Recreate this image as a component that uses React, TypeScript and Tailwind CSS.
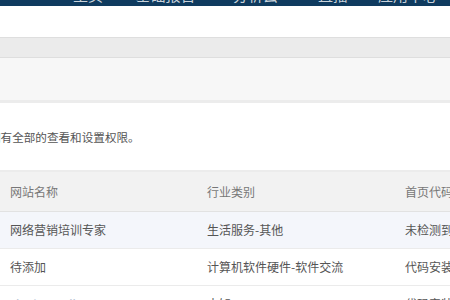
import React from "react";

const font = { fontFamily: '"Microsoft YaHei", "Noto Sans CJK SC", "Liberation Sans", sans-serif' };

const navItems = [
  { label: "主页", w: "w-[60px]" },
  { label: "基础报告", w: "w-[95px]" },
  { label: "分析云", w: "w-[85px]" },
  { label: "直播", w: "w-[70px]" },
  { label: "应用中心", w: "w-[80px]" },
];

const rows = [
  { name: "网络营销培训专家", cat: "生活服务-其他", code: "未检测到代码", active: true, faint: false },
  { name: "待添加", cat: "计算机软件硬件-软件交流", code: "代码安装正确", active: false, faint: false },
  { name: "xiaohuangjian.com", cat: "未知", code: "代码安装正确", active: false, faint: true },
];

export default function App() {
  return (
    <div className="w-[450px] h-[300px] overflow-hidden bg-white text-[12px]" style={font}>
      {/* top navigation */}
      <div className="h-[6px] bg-[#0f3b5f] overflow-hidden flex pl-[58px]">
        {navItems.map((n) => (
          <div key={n.label} className={`${n.w} text-center text-[15px] leading-[20px] -mt-[15px] text-[#c9d2da] shrink-0`}>
            {n.label}
          </div>
        ))}
      </div>
      <div className="h-[31px] bg-white" />
      {/* breadcrumb strip */}
      <div className="h-[21px] bg-[#ebebeb] border-y border-[#dedede]" />
      {/* toolbar */}
      <div className="h-[45px] bg-[#f7f7f7] border-b-[3px] border-[#ececec]" />
      {/* notice */}
      <div className="h-[67px] flex items-center bg-white">
        <p className="-ml-[127px] pt-[3px] text-[11.6px] text-[#555] whitespace-nowrap">
          您是该账户的所有者，拥有全部的查看和设置权限。
        </p>
      </div>
      {/* site table */}
      <div className="border-t-[2px] border-[#ececec]">
        <div className="h-[40px] bg-[#f2f2f2] border-b border-[#e2e2e2] flex items-center text-[#777]">
          <div className="w-[197px] pl-[10px] shrink-0">网站名称</div>
          <div className="w-[198px] pl-[10px] shrink-0">行业类别</div>
          <div className="pl-[10px] whitespace-nowrap">首页代码状态</div>
        </div>
        {rows.map((r) => (
          <div
            key={r.name}
            className={`h-[37px] border-b border-[#ebebeb] flex items-center text-[#555] whitespace-nowrap ${r.active ? "bg-[#f4f6fb]" : "bg-white"}`}
          >
            <div className={`w-[197px] pl-[10px] shrink-0 ${r.faint ? "text-[#b8c4d4]" : ""}`}>{r.name}</div>
            <div className="w-[198px] pl-[10px] shrink-0">{r.cat}</div>
            <div className="pl-[10px]">{r.code}</div>
          </div>
        ))}
      </div>
    </div>
  );
}
